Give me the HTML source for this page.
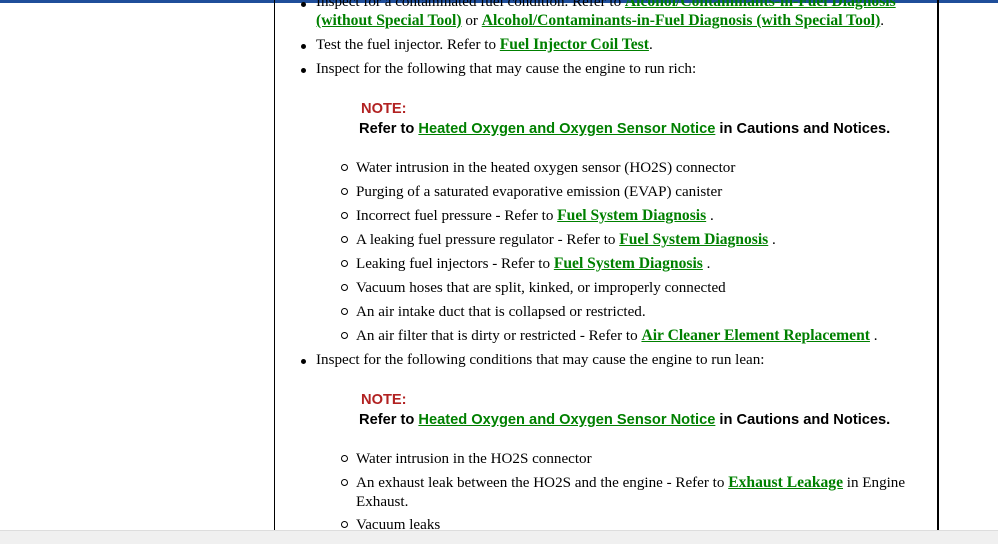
<!DOCTYPE html><html><head><style>
body{margin:0;width:998px;height:543px;overflow:hidden;background:#fff;position:relative;font-family:"Liberation Serif",serif;font-size:15.1px;color:#000}
.t{position:absolute;white-space:nowrap;line-height:18px}
a{color:#008000;font-weight:bold;text-decoration:underline;font-size:15.6px}
.n{font-family:"Liberation Sans",sans-serif;font-weight:bold;font-size:14.65px}
.n a{font-size:14.65px}
.r{color:#b22222}
.b{position:absolute;width:5px;height:5px;border-radius:50%;background:#000}
.o{position:absolute;width:5px;height:5px;border-radius:50%;border:1px solid #000}
</style></head><body>
<div style="position:absolute;left:0;top:0;width:998px;height:3px;background:#1f4e9a"></div>
<div style="position:absolute;left:274px;top:0;width:1px;height:531px;background:#000"></div>
<div style="position:absolute;left:937px;top:0;width:2px;height:531px;background:#000"></div>
<div style="position:absolute;left:0;top:530px;width:998px;height:13px;background:#f0f0f0;border-top:1px solid #ddd"></div>
<div class="t" style="left:316px;top:-7px">Inspect for a contaminated fuel condition. Refer to <a>Alcohol/Contaminants-in-Fuel Diagnosis</a></div>
<div class="t" style="left:316px;top:12px"><a>(without Special Tool)</a> or <a>Alcohol/Contaminants-in-Fuel Diagnosis (with Special Tool)</a>.</div>
<div class="b" style="left:301px;top:2px"></div>
<div class="b" style="left:301px;top:44px"></div><div class="t" style="left:316px;top:36px">Test the fuel injector. Refer to <a>Fuel Injector Coil Test</a>.</div>
<div class="b" style="left:301px;top:68px"></div><div class="t" style="left:316px;top:60px">Inspect for the following that may cause the engine to run rich:</div>
<div class="t n r" style="left:361px;top:100px">NOTE:</div>
<div class="t n" style="left:359px;top:120px">Refer to <a>Heated Oxygen and Oxygen Sensor Notice</a> in Cautions and Notices.</div>
<div class="o" style="left:341px;top:164px"></div><div class="t" style="left:356px;top:159px">Water intrusion in the heated oxygen sensor (HO2S) connector</div>
<div class="o" style="left:341px;top:188px"></div><div class="t" style="left:356px;top:183px">Purging of a saturated evaporative emission (EVAP) canister</div>
<div class="o" style="left:341px;top:212px"></div><div class="t" style="left:356px;top:207px">Incorrect fuel pressure - Refer to <a>Fuel System Diagnosis</a> .</div>
<div class="o" style="left:341px;top:236px"></div><div class="t" style="left:356px;top:231px">A leaking fuel pressure regulator - Refer to <a>Fuel System Diagnosis</a> .</div>
<div class="o" style="left:341px;top:260px"></div><div class="t" style="left:356px;top:255px">Leaking fuel injectors - Refer to <a>Fuel System Diagnosis</a> .</div>
<div class="o" style="left:341px;top:284px"></div><div class="t" style="left:356px;top:279px">Vacuum hoses that are split, kinked, or improperly connected</div>
<div class="o" style="left:341px;top:308px"></div><div class="t" style="left:356px;top:303px">An air intake duct that is collapsed or restricted.</div>
<div class="o" style="left:341px;top:332px"></div><div class="t" style="left:356px;top:327px">An air filter that is dirty or restricted - Refer to <a>Air Cleaner Element Replacement</a> .</div>
<div class="b" style="left:301px;top:359px"></div><div class="t" style="left:316px;top:351px">Inspect for the following conditions that may cause the engine to run lean:</div>
<div class="t n r" style="left:361px;top:391px">NOTE:</div>
<div class="t n" style="left:359px;top:411px">Refer to <a>Heated Oxygen and Oxygen Sensor Notice</a> in Cautions and Notices.</div>
<div class="o" style="left:341px;top:455px"></div><div class="t" style="left:356px;top:450px">Water intrusion in the HO2S connector</div>
<div class="o" style="left:341px;top:479px"></div><div class="t" style="left:356px;top:474px">An exhaust leak between the HO2S and the engine - Refer to <a>Exhaust Leakage</a> in Engine</div>
<div class="t" style="left:356px;top:493px">Exhaust.</div>
<div class="o" style="left:341px;top:521px"></div><div class="t" style="left:356px;top:516px">Vacuum leaks</div>
</body></html>
